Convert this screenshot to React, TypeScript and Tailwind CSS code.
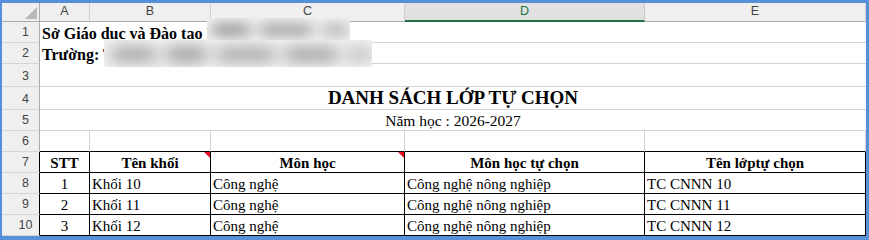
import { Fragment } from "react";

type ColHeadProps = {
  label: string;
  active?: boolean;
};

function ColHead({ label, active }: ColHeadProps) {
  if (active) {
    return (
      <div className="flex items-end justify-center bg-[#e1e1e1] border-r border-r-[#c6c6c6] border-b-2 border-b-[#217346] pb-[1px] text-[12.5px] leading-[15px] text-[#217346] font-['Liberation_Sans',sans-serif]">
        {label}
      </div>
    );
  }
  return (
    <div className="flex items-end justify-center bg-[#efefef] border-r border-r-[#d0d0d0] border-b border-b-[#ababab] pb-[2px] text-[12.5px] leading-[15px] text-[#444] font-['Liberation_Sans',sans-serif]">
      {label}
    </div>
  );
}

function RowHead({ n, dark }: { n: number; dark?: boolean }) {
  return (
    <div
      className={
        dark
          ? "flex items-end justify-center pl-[10px] pb-[2px] bg-[#efefef] border-r border-r-black border-b border-b-[#d5d5d5] text-[12.5px] leading-[15px] text-[#444] font-['Liberation_Sans',sans-serif]"
          : "flex items-end justify-center pl-[10px] pb-[2px] bg-[#efefef] border-r border-r-[#ababab] border-b border-b-[#d5d5d5] text-[12.5px] leading-[15px] text-[#444] font-['Liberation_Sans',sans-serif]"
      }
    >
      {n}
    </div>
  );
}

type CellProps = {
  children?: React.ReactNode;
  bold?: boolean;
  center?: boolean;
  note?: boolean;
};

// cell of the bordered table (rows 7-10)
function Cell({ children, bold, center, note }: CellProps) {
  return (
    <div
      className={
        "relative flex items-end border-r border-b border-black px-[2px] whitespace-nowrap overflow-hidden text-[15px] leading-[17px] text-black font-['Liberation_Serif',serif] " +
        (center ? "justify-center " : "") +
        (bold ? "font-bold" : "")
      }
    >
      {children}
      {note && (
        <div className="absolute top-0 right-0 w-0 h-0 border-t-[6px] border-t-[#e81123] border-l-[6px] border-l-transparent" />
      )}
    </div>
  );
}

const tableRows = [
  ["1", "Khối 10", "Công nghệ", "Công nghệ nông nghiệp", "TC CNNN 10"],
  ["2", "Khối 11", "Công nghệ", "Công nghệ nông nghiệp", "TC CNNN 11"],
  ["3", "Khối 12", "Công nghệ", "Công nghệ nông nghiệp", "TC CNNN 12"],
];

export default function App() {
  return (
    <div className="w-[869px] h-[240px] bg-[#5590d8] pt-[3px] pl-[2px] overflow-hidden">
      <div className="relative w-[864px] bg-white grid grid-cols-[38px_50px_121px_194px_240px_221px] grid-rows-[19px_21px_21px_23px_23px_21px_21px_21px_21px_21px_21px]">
        {/* column headers */}
        <div className="relative bg-[#efefef] border-r border-b border-[#ababab]">
          <div className="absolute right-[2px] bottom-[2px] w-0 h-0 border-l-[12px] border-l-transparent border-b-[12px] border-b-[#b9b9b9]" />
        </div>
        <ColHead label="A" />
        <ColHead label="B" />
        <ColHead label="C" />
        <ColHead label="D" active />
        <ColHead label="E" />

        {/* row 1 */}
        <RowHead n={1} />
        <div className="col-span-2 flex items-end pl-[2px] whitespace-nowrap text-[16px] leading-[18px] font-bold text-black font-['Liberation_Serif',serif]">
          Sở Giáo dục và Đào tạo H
        </div>
        <div className="col-span-3 border-b border-[#d4d4d4]" />

        {/* row 2 */}
        <RowHead n={2} />
        <div className="col-span-2 flex items-end pl-[2px] whitespace-nowrap text-[16px] leading-[18px] font-bold text-black font-['Liberation_Serif',serif]">
          Trường: T
        </div>
        <div className="col-span-3 border-b border-[#d4d4d4]" />

        {/* row 3 */}
        <RowHead n={3} />
        <div className="col-span-5 border-b border-[#d4d4d4]" />

        {/* row 4 - title */}
        <RowHead n={4} />
        <div className="col-span-5 flex items-end justify-center border-b border-[#d4d4d4] text-[19px] leading-[22px] font-bold text-black font-['Liberation_Serif',serif]">
          DANH SÁCH LỚP TỰ CHỌN
        </div>

        {/* row 5 */}
        <RowHead n={5} />
        <div className="col-span-5 flex items-end justify-center border-b border-[#d4d4d4] text-[15.5px] leading-[18px] text-black font-['Liberation_Serif',serif]">
          Năm học : 2026-2027
        </div>

        {/* row 6 */}
        <RowHead n={6} />
        <div className="border-r border-r-[#d4d4d4] border-b border-b-black" />
        <div className="border-r border-r-[#d4d4d4] border-b border-b-black" />
        <div className="border-r border-r-[#d4d4d4] border-b border-b-black" />
        <div className="border-r border-r-[#d4d4d4] border-b border-b-black" />
        <div className="border-r border-r-[#d4d4d4] border-b border-b-black" />

        {/* row 7 - table header */}
        <RowHead n={7} dark />
        <Cell bold center>STT</Cell>
        <Cell bold center note>Tên khối</Cell>
        <Cell bold center note>Môn học</Cell>
        <Cell bold center>Môn học tự chọn</Cell>
        <Cell bold center>Tên lớptự chọn</Cell>

        {tableRows.map((row, i) => (
          <Fragment key={row[0]}>
            <RowHead n={i + 8} dark />
            <Cell center>{row[0]}</Cell>
            <Cell>{row[1]}</Cell>
            <Cell>{row[2]}</Cell>
            <Cell>{row[3]}</Cell>
            <Cell>{row[4]}</Cell>
          </Fragment>
        ))}

        {/* blurred personal info */}
        <div className="absolute left-[205px] top-[15px] w-[143px] h-[22px] overflow-hidden bg-[#f3f3f3]">
          <div className="flex gap-[8px] pl-[4px] pt-[6px] blur-[7px]">
            <div className="w-[40px] h-[12px] rounded-full bg-[#8f8f8f]" />
            <div className="w-[54px] h-[12px] rounded-full bg-[#9c9c9c]" />
            <div className="w-[28px] h-[12px] rounded-full bg-[#b0b0b0]" />
          </div>
        </div>
        <div className="absolute left-[102px] top-[37px] w-[268px] h-[27px] overflow-hidden bg-[#f3f3f3]">
          <div className="flex gap-[8px] pl-[6px] pt-[8px] blur-[8px]">
            <div className="w-[48px] h-[13px] rounded-full bg-[#969696]" />
            <div className="w-[44px] h-[13px] rounded-full bg-[#8f8f8f]" />
            <div className="w-[62px] h-[13px] rounded-full bg-[#9c9c9c]" />
            <div className="w-[56px] h-[13px] rounded-full bg-[#969696]" />
            <div className="w-[26px] h-[13px] rounded-full bg-[#b4b4b4]" />
          </div>
        </div>
      </div>
    </div>
  );
}
